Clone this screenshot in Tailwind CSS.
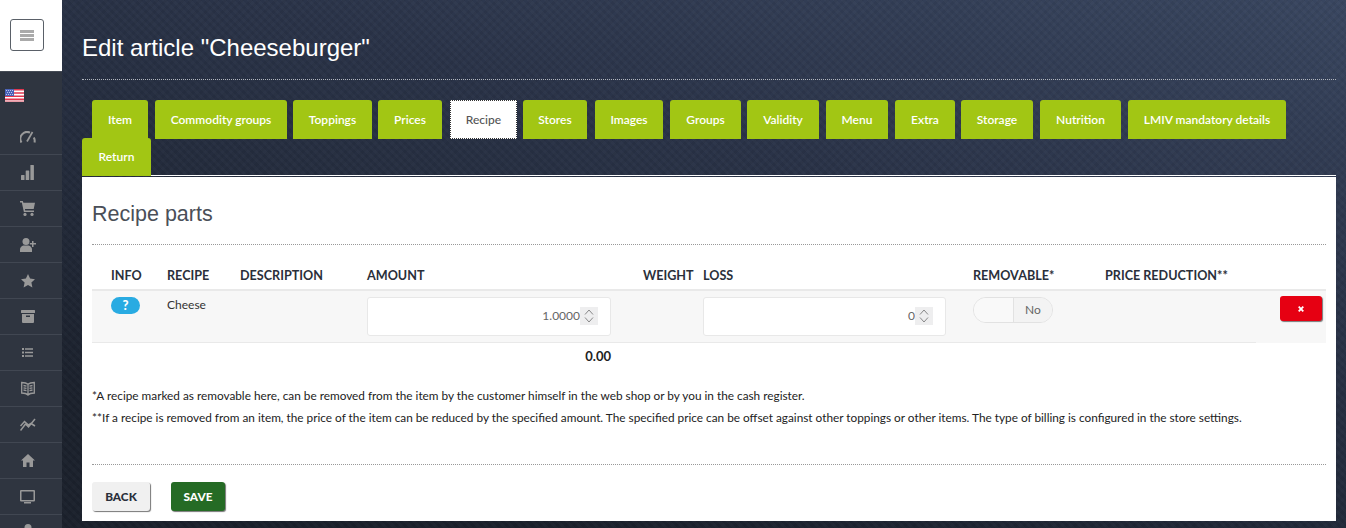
<!DOCTYPE html>
<html lang="en">
<head>
<meta charset="utf-8">
<title>Edit article</title>
<script src="https://cdn.jsdelivr.net/npm/@tailwindcss/browser@4"></script>
</head>
<body class="m-0 h-[528px] w-[1346px] overflow-hidden bg-[#1c222d] font-['Lato',sans-serif] text-[#222]">
<div class="flex h-[528px]">
  <aside class="flex w-[62px] shrink-0 flex-col overflow-hidden bg-[#2f3540]">
    <div class="flex h-[72px] shrink-0 items-start border-b border-[#454b55] bg-white pl-[10px] pt-[19px]">
      <button class="flex h-[32px] w-[34px] flex-col items-center justify-center gap-[1px] rounded-[3px] border border-[#5a6068] bg-white">
        <span class="h-[3px] w-[14px] bg-[#aaa]"></span><span class="h-[3px] w-[14px] bg-[#aaa]"></span><span class="h-[3px] w-[14px] bg-[#aaa]"></span>
      </button>
    </div>
    <div class="flex h-[47px] shrink-0 items-start pl-[5px] pt-[17px]">
      <svg width="19" height="13" viewBox="0 0 19 13"><rect width="19" height="13" fill="#fff"/><path d="M0 0h19v1.6H0zM0 3.2h19v1.6H0zM0 6.4h19v1.6H0zM0 9.6h19v1.6H0z" fill="#e0374f"/><rect y="11.4" width="19" height="1.6" fill="#e89aa6"/><rect width="9" height="7" fill="#4a63b8"/><path d="M1 1h1v1H1zM3 1h1v1H3zM5 1h1v1H5zM7 1h1v1H7zM2 3h1v1H2zM4 3h1v1H4zM6 3h1v1H6zM1 5h1v1H1zM3 5h1v1H3zM5 5h1v1H5zM7 5h1v1H7z" fill="#b9c4ea"/></svg>
    </div>
    <div class="flex h-[36px] shrink-0 items-center justify-center border-b border-[#414752] pr-[7px]"><svg width="16" height="12" viewBox="0 0 16 12" fill="none" stroke="#999" stroke-width="2"><path d="M1.500 11.500A6.800 6.800 0 0 1 10 1.600M14.500 11.500A6.800 6.800 0 0 0 13.800 6.500"/><path d="M7 10.500L12.500 1" stroke-width="1.700"/></svg></div>
    <div class="flex h-[36px] shrink-0 items-center justify-center border-b border-[#414752] pr-[7px]"><svg width="13" height="15" viewBox="0 0 13 15" fill="#999"><rect x="0" y="10" width="3.500" height="5" rx=".5"/><rect x="4.700" y="5.500" width="3.500" height="9.500" rx=".5"/><rect x="9.400" y="0" width="3.500" height="15" rx=".5"/></svg></div>
    <div class="flex h-[36px] shrink-0 items-center justify-center border-b border-[#414752] pr-[7px]"><svg width="15" height="15" viewBox="0 0 15 15" fill="#999"><path d="M0 0h2.800l.6 1.800H15l-1.300 6.200H4.900l.3 1.500H14v1.500H3.900L1.800 1.500H0z"/><circle cx="5" cy="13.400" r="1.600"/><circle cx="12" cy="13.400" r="1.600"/></svg></div>
    <div class="flex h-[36px] shrink-0 items-center justify-center border-b border-[#414752] pr-[6px]"><svg width="16" height="14" viewBox="0 0 16 14" fill="#999"><circle cx="6" cy="3.500" r="3.500"/><path d="M0 14v-2.500C0 9 2.500 7.500 4 7.500h4c1.500 0 4 1.500 4 4V14z"/><path d="M12 3h1.500v2H16v1.500h-2.500V9H12V6.500H9.800V5H12z"/></svg></div>
    <div class="flex h-[36px] shrink-0 items-center justify-center border-b border-[#414752] pr-[7px]"><svg width="14" height="14" viewBox="0 0 14 14" fill="#999"><path d="M7 0l2.100 4.600 4.900.6-3.600 3.400 1 4.900L7 11.100 2.600 13.500l1-4.900L0 5.200l4.900-.6z"/></svg></div>
    <div class="flex h-[36px] shrink-0 items-center justify-center border-b border-[#414752] pr-[7px]"><svg width="14" height="13" viewBox="0 0 14 13" fill="#999"><rect width="14" height="3" rx=".5"/><path d="M1 4h12v8a1 1 0 0 1-1 1H2a1 1 0 0 1-1-1zM5 5.500v1.500h4V5.500z" fill-rule="evenodd"/></svg></div>
    <div class="flex h-[36px] shrink-0 items-center justify-center border-b border-[#414752] pr-[7px]"><svg width="11" height="9" viewBox="0 0 11 9" fill="#999"><path d="M0 0h2v2H0zM0 3.500h2v2H0zM0 7h2v2H0zM3 .2H11V1.800H3zM3 3.700H11V5.300H3zM3 7.200H11V8.800H3z"/></svg></div>
    <div class="flex h-[36px] shrink-0 items-center justify-center border-b border-[#414752] pr-[7px]"><svg width="14" height="15" viewBox="0 0 14 15" fill="none" stroke="#999" stroke-width="1.300"><path d="M.7 1.500C3 1.500 5.500 1.800 7 3.200 8.500 1.800 11 1.500 13.300 1.500V12c-2.300 0-4.800.3-6.300 2-1.500-1.700-4-2-6.300-2zM7 3.200V14M2.500 4.500l3 .6M2.500 6.800l3 .6M2.500 9l3 .6M11.500 4.500l-3 .6M11.500 6.800l-3 .6M11.500 9l-3 .6"/></svg></div>
    <div class="flex h-[36px] shrink-0 items-center justify-center border-b border-[#414752] pr-[7px]"><svg width="16" height="13" viewBox="0 0 16 13" fill="none" stroke="#999" stroke-width="1.500"><path d="M.5 12.500L5.500 6l3 3L15 1M.5 8L4.500 3.500l4 3.500L11 5.500l4 2.500"/></svg></div>
    <div class="flex h-[36px] shrink-0 items-center justify-center border-b border-[#414752] pr-[7px]"><svg width="14" height="13" viewBox="0 0 14 13" fill="#999"><path d="M7 0l7 6.500h-2V13H8.500V8.500h-3V13H2V6.500H0z"/></svg></div>
    <div class="flex h-[36px] shrink-0 items-center justify-center border-b border-[#414752] pr-[7px]"><svg width="15" height="14" viewBox="0 0 15 14" fill="#999"><path fill-rule="evenodd" d="M1 0h13a1 1 0 0 1 1 1v9.500a1 1 0 0 1-1 1H1a1 1 0 0 1-1-1V1a1 1 0 0 1 1-1zM1.500 1.500v8.500h12V1.500z"/><path d="M4 12h7v1.500H4z"/></svg></div>
    <div class="flex h-[36px] shrink-0 items-start justify-center pr-[7px] pt-[9px]"><svg width="14" height="14" viewBox="0 0 14 14" fill="#999"><circle cx="7" cy="3.500" r="3.500"/></svg></div>
  </aside>

  <main class="flex h-[528px] min-w-0 flex-1 flex-col bg-[repeating-linear-gradient(45deg,rgba(255,255,255,.018)_0_3px,transparent_3px_6px),repeating-linear-gradient(-45deg,rgba(0,0,0,.05)_0_3px,transparent_3px_6px),linear-gradient(195deg,#394660_0%,#2a3348_35%,#1b212c_85%)] pl-[20px] pr-[10px]">
    <h1 class="m-0 h-[80px] shrink-0 border-b border-dotted border-[#b0b5bd] pt-[33px] font-['Liberation_Sans',sans-serif] text-[24px]/[30px] font-normal text-white">Edit article "Cheeseburger"</h1>
    <div class="h-[20px] shrink-0"></div>
    <nav class="shrink-0 text-[12px] font-semibold text-white">
      <div class="flex h-[39px] pl-[10px]">
        <a class="flex h-[39px] w-[56px] items-center justify-center rounded-t-[3px] bg-[#a2c614]">Item</a>
        <a class="ml-[7px] flex h-[39px] w-[132px] items-center justify-center rounded-t-[3px] bg-[#a2c614]">Commodity groups</a>
        <a class="ml-[6px] flex h-[39px] w-[79px] items-center justify-center rounded-t-[3px] bg-[#a2c614]">Toppings</a>
        <a class="ml-[6px] flex h-[39px] w-[64px] items-center justify-center rounded-t-[3px] bg-[#a2c614]">Prices</a>
        <a class="ml-[8px] flex h-[39px] w-[67px] items-center justify-center border border-dotted border-[#333] bg-white font-medium text-[#555]">Recipe</a>
        <a class="ml-[6px] flex h-[39px] w-[64px] items-center justify-center rounded-t-[3px] bg-[#a2c614]">Stores</a>
        <a class="ml-[8px] flex h-[39px] w-[68px] items-center justify-center rounded-t-[3px] bg-[#a2c614]">Images</a>
        <a class="ml-[7px] flex h-[39px] w-[71px] items-center justify-center rounded-t-[3px] bg-[#a2c614]">Groups</a>
        <a class="ml-[6px] flex h-[39px] w-[72px] items-center justify-center rounded-t-[3px] bg-[#a2c614]">Validity</a>
        <a class="ml-[7px] flex h-[39px] w-[62px] items-center justify-center rounded-t-[3px] bg-[#a2c614]">Menu</a>
        <a class="ml-[7px] flex h-[39px] w-[60px] items-center justify-center rounded-t-[3px] bg-[#a2c614]">Extra</a>
        <a class="ml-[6px] flex h-[39px] w-[72px] items-center justify-center rounded-t-[3px] bg-[#a2c614]">Storage</a>
        <a class="ml-[7px] flex h-[39px] w-[81px] items-center justify-center rounded-t-[3px] bg-[#a2c614]">Nutrition</a>
        <a class="ml-[7px] flex h-[39px] w-[158px] items-center justify-center rounded-t-[3px] bg-[#a2c614]">LMIV mandatory details</a>
      </div>
      <div class="-mt-[1px] flex h-[38px]">
        <a class="flex h-[38px] w-[69px] items-center justify-center rounded-t-[3px] bg-[#a2c614]">Return</a>
        <span class="h-[1px] flex-1 self-end bg-white"></span>
      </div>
    </nav>
    <section class="mt-[1px] h-[344px] shrink-0 bg-white px-[10px] pt-[24px]">
      <h2 class="m-0 h-[44px] border-b border-dotted border-[#999] font-['Liberation_Sans',sans-serif] text-[21.5px]/[26px] font-normal text-[#4a4f58]">Recipe parts</h2>
      <div class="grid h-[46px] grid-cols-[56px_73px_127px_276px_60px_270px_132px_1fr] items-end border-b-2 border-[#e9e9e9] pb-[5px] pl-[19px] text-[12.6px]/[16px] font-bold text-[#2a2f3a]">
        <div>INFO</div><div>RECIPE</div><div>DESCRIPTION</div><div>AMOUNT</div><div>WEIGHT</div><div>LOSS</div><div>REMOVABLE*</div><div>PRICE REDUCTION**</div>
      </div>
      <div class="grid h-[52px] grid-cols-[56px_73px_127px_276px_60px_270px_132px_1fr] bg-[#f7f7f7] pl-[19px] text-[12px]">
        <div class="pt-[6px]"><span class="flex h-[17px] w-[29px] items-center justify-center rounded-full bg-[#29abe2] text-[13px] font-black text-white">?</span></div>
        <div class="pt-[6px] leading-[16px] text-[#333]">Cheese</div>
        <div></div>
        <div class="pt-[6px]">
          <div class="flex h-[39px] w-[244px] items-center justify-end rounded-[3px] border border-[#e8e8e8] bg-white pb-[1px] pr-[12px] text-[#666]">1.0000
            <span class="flex h-[18px] w-[18px] flex-col items-center justify-center gap-[2px] bg-[#eeeeef]">
              <svg width="10" height="6" viewBox="0 0 10 6" fill="none" stroke="#888"><path d="M1 5.500L5 1l4 4.500"/></svg><svg width="10" height="6" viewBox="0 0 10 6" fill="none" stroke="#888"><path d="M1 .5L5 5l4-4.500"/></svg>
            </span>
          </div>
        </div>
        <div></div>
        <div class="pt-[6px]">
          <div class="flex h-[39px] w-[243px] items-center justify-end rounded-[3px] border border-[#e8e8e8] bg-white pb-[1px] pr-[12px] text-[#666]">0
            <span class="flex h-[18px] w-[18px] flex-col items-center justify-center gap-[2px] bg-[#eeeeef]">
              <svg width="10" height="6" viewBox="0 0 10 6" fill="none" stroke="#888"><path d="M1 5.500L5 1l4 4.500"/></svg><svg width="10" height="6" viewBox="0 0 10 6" fill="none" stroke="#888"><path d="M1 .5L5 5l4-4.500"/></svg>
            </span>
          </div>
        </div>
        <div class="pt-[6px]">
          <div class="flex h-[26px] w-[80px] overflow-hidden rounded-full border border-[#e2e2e2]">
            <span class="w-[40px] border-r border-[#e2e2e2] bg-[#f9f9f9]"></span>
            <span class="flex flex-1 items-center justify-center bg-[#f3f3f3] text-[#666]">No</span>
          </div>
        </div>
        <div class="flex items-start justify-end pr-[4px] pt-[5px]">
          <button class="flex h-[25px] w-[42px] items-center justify-center rounded-[3px] bg-[#e60012] shadow-[1px_1px_1px_#777]"><svg width="6" height="6" viewBox="0 0 6 6" stroke="#fff" stroke-width="1.800"><path d="M.7.7l4.600 4.600M5.300.7L.7 5.300"/></svg></button>
        </div>
      </div>
      <div class="-mt-[1px] h-[1px] w-[1164px] bg-[#e9e9e9]"></div>
      <div class="h-[28px] w-[519px] pt-[4px] text-right text-[13px]/[18px] font-bold text-[#222]">0.00</div>
      <p class="m-0 mt-[14px] text-[11.8px]/[22px] text-[#222]">*A recipe marked as removable here, can be removed from the item by the customer himself in the web shop or by you in the cash register.</p>
      <p class="m-0 text-[11.8px]/[22px] text-[#222]">**If a recipe is removed from an item, the price of the item can be reduced by the specified amount. The specified price can be offset against other toppings or other items. The type of billing is configured in the store settings.</p>
      <div class="mt-[35px] flex gap-[21px] border-t border-dotted border-[#999] pt-[17px] text-[11.8px] font-black">
        <button class="h-[29px] w-[58px] rounded-[3px] bg-[#f0f0f0] text-[#2a2f3a] shadow-[1px_1px_1px_#777]">BACK</button>
        <button class="h-[29px] w-[54px] rounded-[3px] bg-[#256b25] text-white shadow-[1px_1px_1px_#777]">SAVE</button>
      </div>
    </section>
  </main>
</div>
</body>
</html>
